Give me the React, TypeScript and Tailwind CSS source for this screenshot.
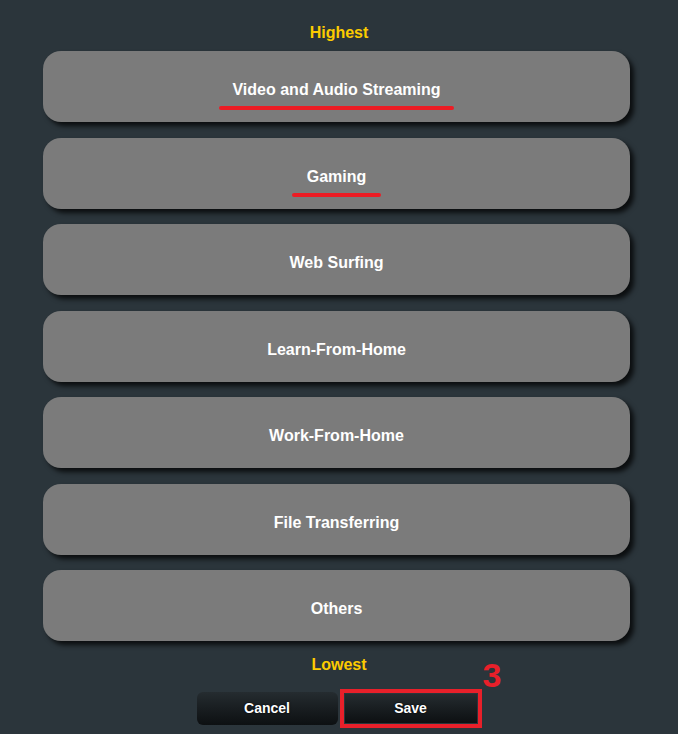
const categories = [
  { label: "Video and Audio Streaming", mark: "w-[235px]" },
  { label: "Gaming", mark: "w-[89px]" },
  { label: "Web Surfing" },
  { label: "Learn-From-Home" },
  { label: "Work-From-Home" },
  { label: "File Transferring" },
  { label: "Others" },
];

export default function App() {
  return (
    <div className="flex h-[734px] w-full flex-col items-center overflow-hidden bg-[#2b353b] pt-[24px] font-['Liberation_Sans',Arial,sans-serif]">
      <p className="text-[16px] leading-[18px] font-bold text-[#fccb00]">Highest</p>

      <div className="mt-[9px] flex w-full flex-col gap-[15.5px] pl-[43px] pr-[48px]">
        {categories.map((c) => (
          <div
            key={c.label}
            className="flex h-[71px] flex-col items-center rounded-[18px] bg-[#7b7b7b] pt-[30px] shadow-[4px_4px_5px_rgba(0,0,0,0.75)]"
          >
            <span className="text-[16px] leading-[18px] font-bold text-white">{c.label}</span>
            {c.mark && <span className={`mt-[7px] h-[4px] rounded-full bg-[#ec1c24] ${c.mark}`} />}
          </div>
        ))}
      </div>

      <p className="mt-[15px] text-[16px] leading-[18px] font-bold text-[#fccb00]">Lowest</p>

      <div className="mt-[15px] flex items-center gap-[2px]">
        <button className="h-[33px] w-[141px] rounded-[6px] bg-gradient-to-b from-[#252c30] to-[#0d1012] text-[14px] font-bold text-white [text-shadow:0_0_2px_#000]">
          Cancel
        </button>
        <div className="relative border-4 border-[#e8202a] p-[1px]">
          <button className="block h-[29px] w-[132px] bg-gradient-to-b from-[#252c30] to-[#0d1012] text-[14px] font-bold text-white [text-shadow:0_0_2px_#000]">
            Save
          </button>
          <span className="absolute left-[139px] top-[-38px] text-[34px] leading-[40px] font-bold text-[#e8202a]">3</span>
        </div>
      </div>
    </div>
  );
}
